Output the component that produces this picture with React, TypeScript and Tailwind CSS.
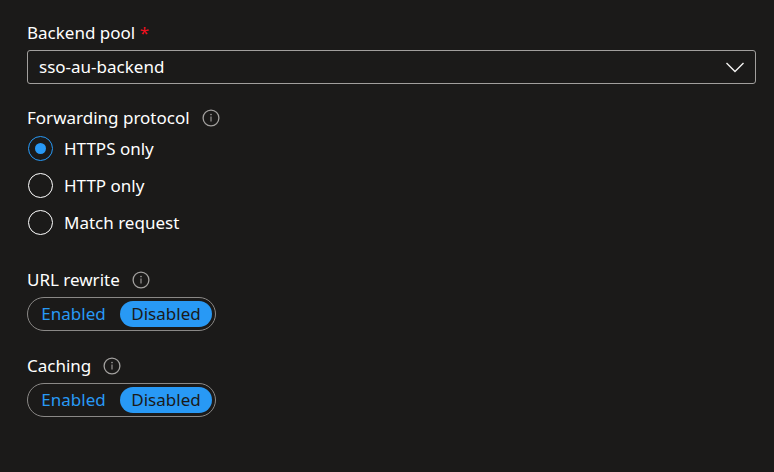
import { useState } from "react";

function InfoIcon() {
  return (
    <svg className="size-[18px] text-[#a3a19f]" viewBox="0 0 18 18" fill="none" aria-hidden="true">
      <circle cx="9" cy="9" r="7.9" stroke="currentColor" strokeWidth="1.3" />
      <path d="M9 7.6v5" stroke="currentColor" strokeWidth="1.1" />
      <circle cx="9" cy="5.6" r="0.8" fill="currentColor" />
    </svg>
  );
}

function RadioOption({ label, checked, onSelect }: { label: string; checked: boolean; onSelect: () => void }) {
  return (
    <label className="flex items-center gap-[11px] leading-6">
      <input
        type="radio"
        name="forwarding-protocol"
        checked={checked}
        onChange={onSelect}
        className="grid size-[25px] shrink-0 appearance-none place-items-center rounded-full border border-white before:size-[11px] before:rounded-full checked:border-[#2899f5] checked:before:bg-[#2899f5]"
      />
      {label}
    </label>
  );
}

function ToggleField({ label }: { label: string }) {
  const [value, setValue] = useState("Disabled");
  const id = label.toLowerCase().replace(" ", "-");
  return (
    <div>
      <div className="flex items-center gap-3 leading-6">
        <span id={id}>{label}</span>
        <InfoIcon />
      </div>
      <div
        role="group"
        aria-labelledby={id}
        className="mt-[5px] flex h-[34px] w-[189px] gap-1 rounded-full border border-[#8a8886] p-[3px]"
      >
        {["Enabled", "Disabled"].map((option) => (
          <button
            key={option}
            type="button"
            aria-pressed={value === option}
            onClick={() => setValue(option)}
            className="flex flex-1 items-center justify-center rounded-full text-[#2899f5] last:w-[92px] last:flex-none aria-pressed:bg-[#2899f5] aria-pressed:text-[#1b1a19]"
          >
            {option}
          </button>
        ))}
      </div>
    </div>
  );
}

export default function App() {
  const [protocol, setProtocol] = useState("HTTPS only");
  return (
    <main className="min-h-screen bg-[#1b1a19] pt-[21px] pr-[18px] pb-8 pl-[27px] font-['Noto_Sans','Open_Sans',sans-serif] text-[17px] text-white">
      <form>
        <label htmlFor="backend-pool" className="block leading-6">
          Backend pool <span className="text-[#f1101f]">*</span>
        </label>
        <div className="mt-[5px] grid items-center">
          <select
            id="backend-pool"
            required
            className="col-start-1 row-start-1 h-[34px] w-full appearance-none rounded-[3px] border border-[#a19f9d] bg-transparent pr-10 pl-[11px]"
          >
            <option>sso-au-backend</option>
          </select>
          <svg
            className="pointer-events-none col-start-1 row-start-1 mr-3 h-3 w-[18px] justify-self-end"
            viewBox="0 0 18 12"
            fill="none"
            stroke="#f3f2f1"
            strokeWidth="1.4"
            aria-hidden="true"
          >
            <path d="M.5 2 9 10.500 17.500 2" />
          </svg>
        </div>
        <fieldset className="mt-[22px]">
          <legend className="flex items-center gap-3 leading-6">
            Forwarding protocol
            <InfoIcon />
          </legend>
          <div className="mt-[6px] ml-px flex flex-col items-start gap-3">
            {["HTTPS only", "HTTP only", "Match request"].map((option) => (
              <RadioOption
                key={option}
                label={option}
                checked={protocol === option}
                onSelect={() => setProtocol(option)}
              />
            ))}
          </div>
        </fieldset>
        <div className="mt-[33px] flex flex-col gap-[23px]">
          <ToggleField label="URL rewrite" />
          <ToggleField label="Caching" />
        </div>
      </form>
    </main>
  );
}
